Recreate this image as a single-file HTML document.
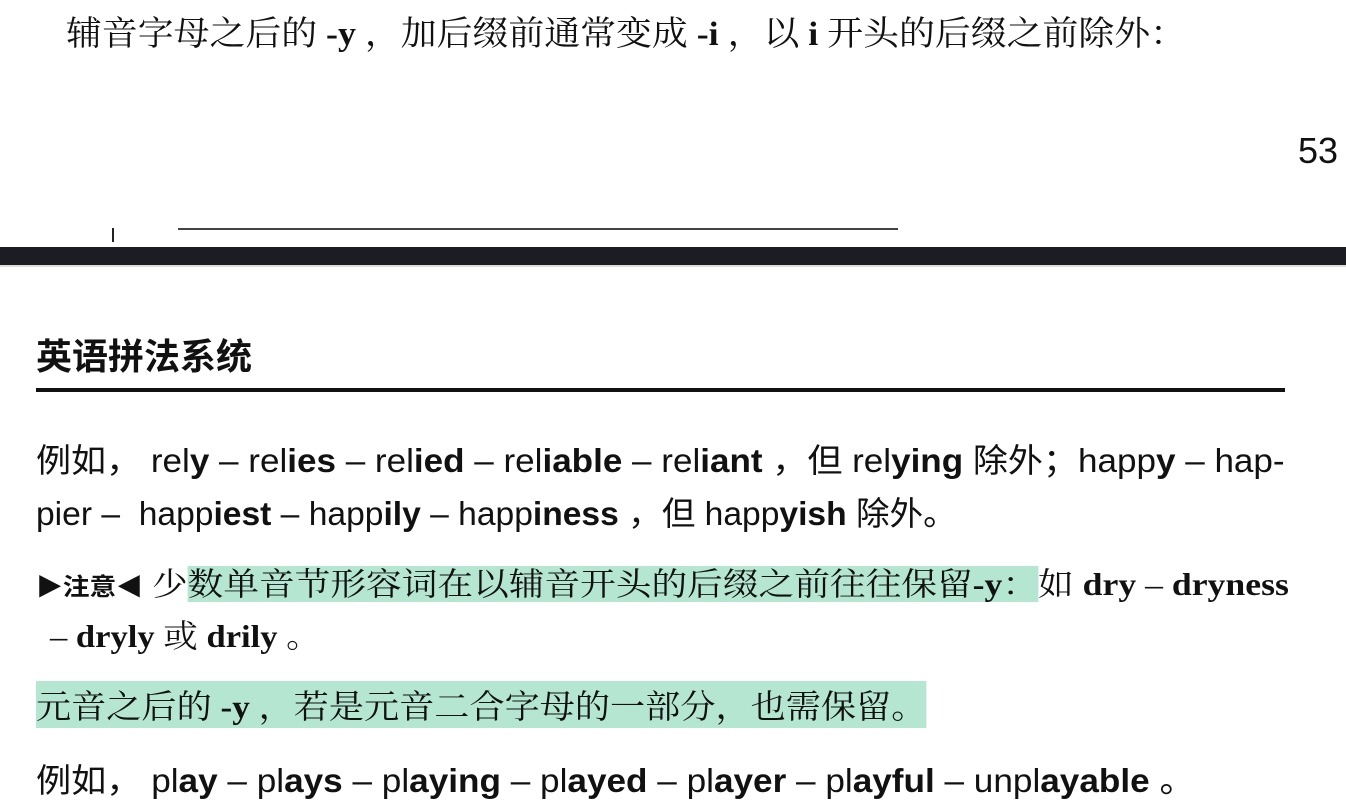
<!DOCTYPE html>
<html><head><meta charset="utf-8"><style>
body{margin:0;width:1346px;height:802px;background:#fff;position:relative;overflow:hidden;font-family:"Liberation Serif","Noto Serif CJK SC",serif;color:#111}
.a{position:absolute;white-space:nowrap;transform-origin:0 50%}
.s{font-family:"Liberation Sans","Noto Sans CJK SC",sans-serif}
.h{background:#b5e6d1}
b{font-weight:bold}
</style></head><body>
<div class="a" style="left:66px;top:6px;font-size:34px;transform:scaleX(1.055)">辅音字母之后的 <b>-y</b> ，加后缀前通常变成 <b>-i</b> ，以 <b>i</b> 开头的后缀之前除外：</div>
<div class="a s" style="left:1298px;top:130px;font-size:36px">53</div>
<div class="a" style="left:112px;top:228px;width:2px;height:14px;background:#222"></div>
<div class="a" style="left:178px;top:228px;width:720px;height:2px;background:#444"></div>
<div class="a" style="left:0;top:247px;width:1346px;height:18px;background:#1c1d22"></div>
<div class="a" style="left:0;top:265px;width:1346px;height:2px;background:#ddd"></div>
<div class="a s" style="left:36px;top:328px;font-size:36px;font-weight:bold">英语拼法系统</div>
<div class="a" style="left:36px;top:388px;width:1249px;height:4px;background:#111"></div>
<div class="a s" style="left:36px;top:434px;font-size:33px;transform:scaleX(1.062)">例如， rel<b>y</b> – rel<b>ies</b> – rel<b>ied</b> – rel<b>iable</b> – rel<b>iant</b> ，但 rel<b>ying</b> 除外；happ<b>y</b> – hap-</div>
<div class="a s" style="left:36px;top:487px;font-size:33px;transform:scaleX(1.018)">pier – &nbsp;happ<b>iest</b> – happ<b>ily</b> – happ<b>iness</b> ，但 happ<b>yish</b> 除外。</div>
<div class="a" style="left:36px;top:559px;font-size:32px;transform:scaleX(1.115)"><span class="s" style="font-weight:bold;font-size:24px">▶注意◀</span> 少<span class="h">数单音节形容词在以辅音开头的后缀之前往往保留<b>-y</b>：</span>如 <b>dry</b> – <b>dryness</b></div>
<div class="a" style="left:50px;top:611px;font-size:32px;transform:scaleX(1.08)">– <b>dryly</b> 或 <b>drily</b> 。</div>
<div class="a h" style="left:36px;top:681px;font-size:33px;transform:scaleX(1.065)">元音之后的 <b>-y</b> ，若是元音二合字母的一部分，也需保留。</div>
<div class="a s" style="left:36px;top:754px;font-size:33px;transform:scaleX(1.065)">例如， pl<b>ay</b> – pl<b>ays</b> – pl<b>aying</b> – pl<b>ayed</b> – pl<b>ayer</b> – pl<b>ayful</b> – unpl<b>ayable</b> 。</div>
</body></html>
